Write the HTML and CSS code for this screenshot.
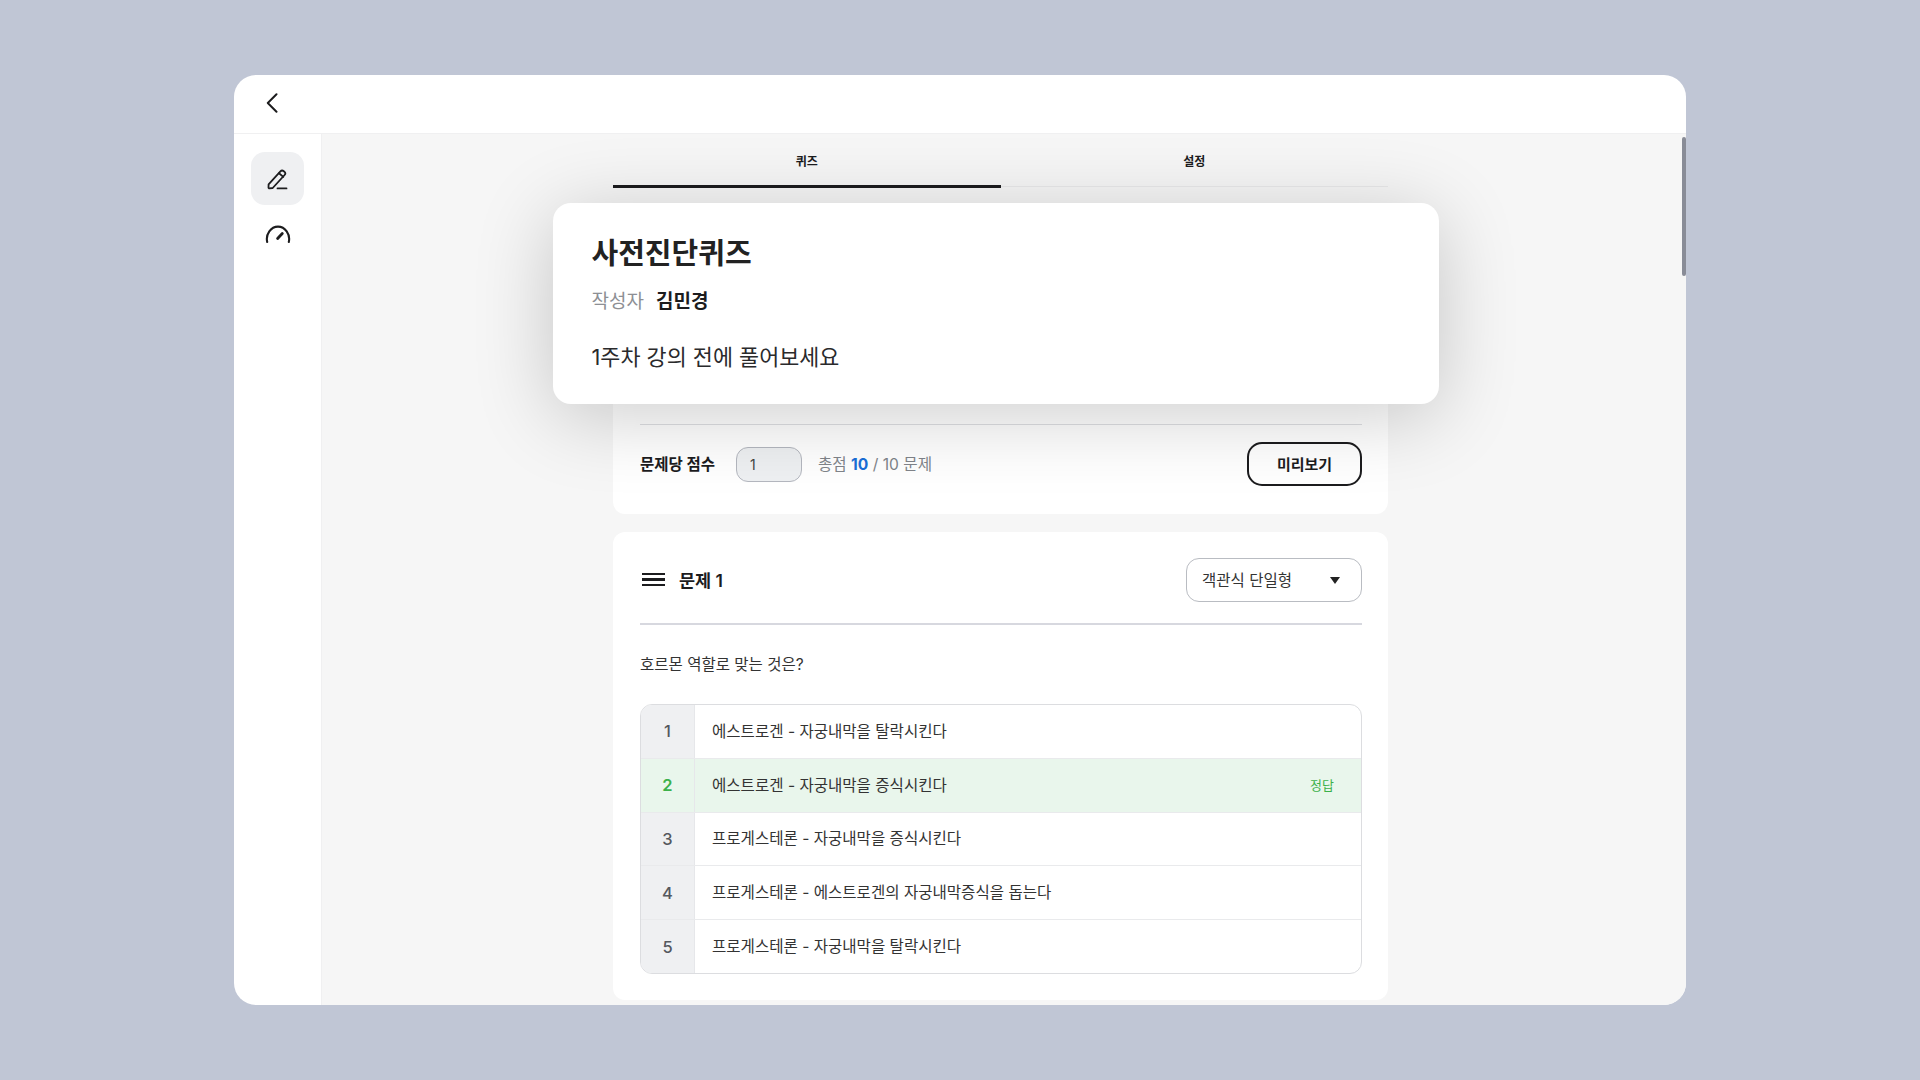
FILE: index.html
```html
<!DOCTYPE html>
<html lang="ko">
<head>
<meta charset="utf-8">
<title>사전진단퀴즈</title>
<link rel="stylesheet" href="styles.css">
</head>
<body>
<div class="window">
  <header class="topbar">
    <svg class="back" width="12" height="20" viewBox="0 0 12 20" fill="none"><path d="M10.500 1.200 1.800 10l8.700 8.800" stroke="#1c1c1e" stroke-width="2" stroke-linecap="round" stroke-linejoin="round"/></svg>
  </header>
  <div class="body">
    <aside class="side">
      <div class="side-btn active">
        <svg width="21" height="21" viewBox="0 0 21 21" fill="none" stroke="#1c1c1e" stroke-width="1.800" stroke-linecap="round" stroke-linejoin="round"><path d="M1.600 15.300 13.400 2.400c.9-1 2.300-1.100 3.400-.2l.6.5c1 .9 1.100 2.300.2 3.300L5.700 19l-3.100.4c-.7.1-1.200-.4-1.100-1.100l.1-3Z"/><path d="M12 4.200l4.300 3.700"/><path d="M10.500 19.400h9"/></svg>
      </div>
      <div class="side-btn gauge">
        <svg width="26" height="18" viewBox="0 0 26 18" fill="none" stroke="#1c1c1e" stroke-width="2.100" stroke-linecap="round"><path d="M2.200 17C.4 9 6 1.600 13 1.600S25.600 9 23.800 17"/><path d="M12.600 13.500 17.300 8.500" stroke-width="2.800"/></svg>
      </div>
    </aside>
    <main class="main">
      <div class="column">
        <nav class="tabs">
          <div class="tab current">퀴즈</div>
          <div class="tab">설정</div>
        </nav>
        <section class="card summary">
          <div class="score-row">
            <span class="score-label">문제당 점수</span>
            <div class="score-input">1</div>
            <span class="score-total">총점 <b>10</b> / 10 문제</span>
            <button class="preview">미리보기</button>
          </div>
        </section>
        <section class="card question">
          <div class="q-head">
            <span class="handle"><i></i><i></i><i></i></span>
            <span class="q-title">문제 1</span>
            <div class="select"><span>객관식 단일형</span><i class="caret"></i></div>
          </div>
          <p class="q-text">호르몬 역할로 맞는 것은?</p>
          <div class="options">
            <div class="option"><span class="num">1</span><span class="opt-text">에스트로겐 - 자궁내막을 탈락시킨다</span></div>
            <div class="option correct"><span class="num">2</span><span class="opt-text">에스트로겐 - 자궁내막을 증식시킨다</span><span class="badge">정답</span></div>
            <div class="option"><span class="num">3</span><span class="opt-text">프로게스테론 - 자궁내막을 증식시킨다</span></div>
            <div class="option"><span class="num">4</span><span class="opt-text">프로게스테론 - 에스트로겐의 자궁내막증식을 돕는다</span></div>
            <div class="option"><span class="num">5</span><span class="opt-text">프로게스테론 - 자궁내막을 탈락시킨다</span></div>
          </div>
        </section>
      </div>
      <div class="scrollbar"></div>
    </main>
  </div>
  <div class="modal">
    <h1>사전진단퀴즈</h1>
    <div class="author"><span>작성자</span><strong>김민경</strong></div>
    <p>1주차 강의 전에 풀어보세요</p>
  </div>
</div>
</body>
</html>
```
FILE: styles.css
```css
* { box-sizing: border-box; }
html, body { height: 100%; }
body {
  margin: 0;
  background: #c0c6d5;
  display: flex;
  align-items: center;
  justify-content: center;
  font-family: "Inter", "Noto Sans CJK KR", sans-serif;
  color: #1c1c1e;
}
.window {
  position: relative;
  width: 1452px;
  height: 930px;
  background: #fff;
  border-radius: 22px;
  overflow: hidden;
  display: flex;
  flex-direction: column;
}
.topbar {
  height: 59px;
  flex: none;
  display: flex;
  align-items: center;
  padding-left: 32px;
  padding-bottom: 3px;
  border-bottom: 1px solid #f0f0f1;
}
.body { flex: 1; display: flex; min-height: 0; }
.side {
  width: 88px;
  flex: none;
  border-right: 1px solid #f0f0f1;
  padding: 18px 0 0 17px;
  display: flex;
  flex-direction: column;
}
.side-btn {
  width: 53px;
  height: 53px;
  border-radius: 14px;
  display: flex;
  align-items: center;
  justify-content: center;
}
.side-btn.active { background: #eff0f2; padding: 1px 0 0 0; }
.side-btn.gauge { height: 18px; margin-top: 20px; }
.main {
  position: relative;
  flex: 1;
  background: #f6f6f6;
  overflow: hidden;
  padding-left: 291px;
}
.column { width: 775px; display: flex; flex-direction: column; }
.tabs {
  display: grid;
  grid-template-columns: 1fr 1fr;
  height: 53px;
  border-bottom: 1px solid #e9e9ea;
}
.tab {
  display: flex;
  align-items: center;
  justify-content: center;
  font-size: 12px;
  font-weight: 700;
  height: 53px;
}
.tab.current { border-bottom: 3px solid #1c1c1e; height: 54px; padding-top: 1px; }
.card { background: #fff; border-radius: 12px; }
.summary {
  margin-top: 113px;
  height: 214px;
  padding: 0 26px 0 27px;
  display: flex;
  flex-direction: column;
  justify-content: flex-end;
}
.score-row {
  height: 90px;
  border-top: 1px solid #dfe0e3;
  display: flex;
  align-items: flex-start;
  padding-top: 17px;
}
.score-label { font-size: 15.500px; font-weight: 700; width: 96px; line-height: 46px; flex: none; }
.score-input {
  width: 66px;
  height: 35px;
  margin-top: 5px;
  background: #eef0f2;
  border: 1px solid #b4b7bf;
  border-radius: 12px;
  font-size: 14px;
  line-height: 33px;
  padding-left: 13px;
  color: #444;
}
.score-total { margin-left: 16px; font-size: 15.600px; color: #80848a; line-height: 46px; }
.score-total b { color: #1a6fd8; font-weight: 700; }
.preview {
  margin-left: auto;
  width: 115px;
  height: 44px;
  background: #fff;
  border: 2.500px solid #1c1c1e;
  border-radius: 15px;
  padding: 0 0 2px;
  font: 700 15px "Inter", "Noto Sans CJK KR", sans-serif;
  color: #1c1c1e;
}
.question { margin-top: 18px; height: 468px; padding: 26px 26px 0 27px; }
.q-head {
  display: flex;
  align-items: center;
  height: 67px;
  padding-bottom: 22px;
  border-bottom: 2px solid #d7d8df;
}
.handle { width: 23px; margin-left: 2px; display: flex; flex-direction: column; gap: 2.800px; position: relative; top: 0; }
.handle i { display: block; height: 2.600px; background: #1c1c1e; }
.q-title { margin-left: 14px; font-size: 17.500px; font-weight: 600; }
.select {
  margin-left: auto;
  width: 176px;
  height: 44px;
  border: 1px solid #b9bcc2;
  border-radius: 13px;
  display: flex;
  align-items: center;
  justify-content: space-between;
  padding: 0 21px 1px 15px;
  font-size: 15.500px;
  color: #333;
}
.caret { width: 0; height: 0; border-left: 5px solid transparent; border-right: 5px solid transparent; border-top: 7px solid #222; margin-top: 2px; }
.q-text { margin: 29px 0 0; font-size: 15.500px; line-height: 22px; color: #333; height: 22px; }
.options {
  margin-top: 28px;
  height: 270px;
  border: 1px solid #dcdde0;
  border-radius: 12px;
  overflow: hidden;
  display: flex;
  flex-direction: column;
}
.option { flex: 1; display: flex; align-items: center; font-size: 15.550px; color: #333; }
.option + .option { border-top: 1.500px solid #e9eaec; }
.option.correct { background: #e9f6ec; }
.num {
  width: 54px;
  flex: none;
  align-self: stretch;
  display: flex;
  align-items: center;
  justify-content: center;
  background: #eff0f2;
  border-right: 1.500px solid #e6e7ea;
  color: #55585e;
  font-size: 16.500px;
  font-weight: 500;
}
.correct .num { background: #e9f6ec; color: #3cb14a; font-weight: 600; }
.opt-text { margin-left: 17px; padding-bottom: 3px; }
.badge { margin-left: auto; margin-right: 27px; font-size: 13px; color: #3cb14a; padding-bottom: 2px; }
.scrollbar {
  position: absolute;
  right: 0;
  top: 3px;
  width: 4px;
  height: 139px;
  background: #898c97;
  border-radius: 2px;
}
.modal {
  position: absolute;
  left: 319px;
  top: 128px;
  width: 886px;
  height: 201px;
  background: #fff;
  border-radius: 18px;
  box-shadow: 0 12px 80px rgba(0, 0, 0, 0.2);
  padding: 30px 38px 30px 38.500px;
}
.modal h1 { margin: 0; font-size: 29px; font-weight: 600; line-height: 42px; color: #222; }
.author { display: flex; gap: 12px; margin-top: 13px; font-size: 19px; line-height: 28px; }
.author span { color: #8d8f94; }
.author strong { font-weight: 600; color: #1c1c1e; }
.modal p { margin: 27px 0 0; font-size: 21.800px; line-height: 28px; color: #2a2a2c; }
```
